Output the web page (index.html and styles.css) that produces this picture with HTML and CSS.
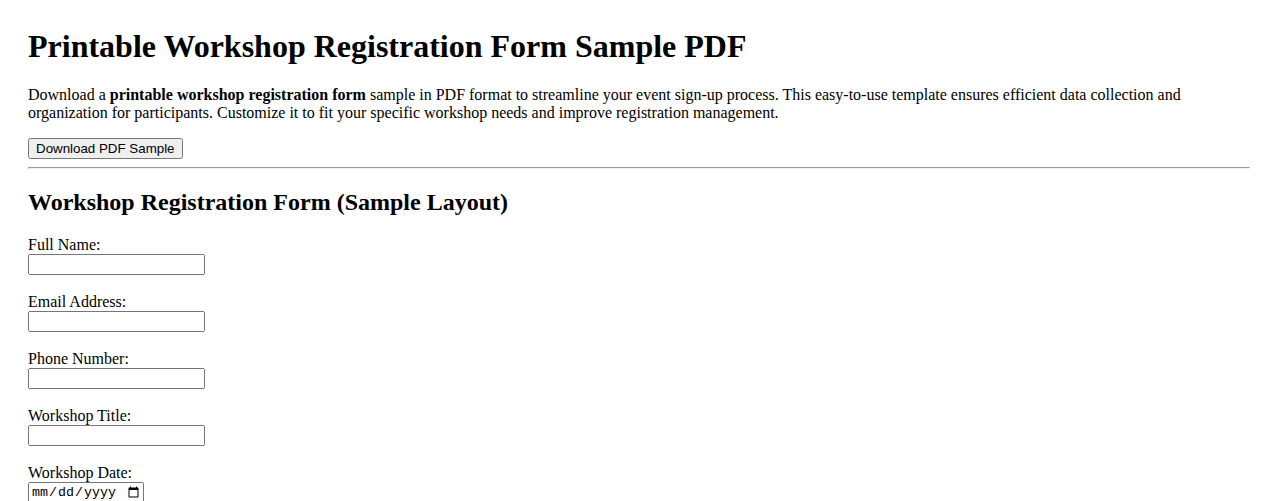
FILE: index.html
```html
<!DOCTYPE html>
<html lang="en">
<head>
<meta charset="utf-8">
<title>Printable Workshop Registration Form Sample PDF</title>
<link rel="stylesheet" href="styles.css">
</head>
<body>
<h1 class="title">Printable Workshop Registration Form Sample PDF</h1>
<p class="intro">Download a <strong>printable workshop registration form</strong> sample in PDF format to streamline your event sign-up process. This easy-to-use template ensures efficient data collection and organization for participants. Customize it to fit your specific workshop needs and improve registration management.</p>
<button class="download" type="button">Download PDF Sample</button>
<hr class="divider">
<h2 class="section-title">Workshop Registration Form (Sample Layout)</h2>
<form class="reg-form">
<label for="name">Full Name:</label><br>
<input class="field" type="text" id="name"><br><br>
<label for="email">Email Address:</label><br>
<input class="field" type="email" id="email"><br><br>
<label for="phone">Phone Number:</label><br>
<input class="field" type="tel" id="phone"><br><br>
<label for="title">Workshop Title:</label><br>
<input class="field" type="text" id="title"><br><br>
<label for="date">Workshop Date:</label><br>
<input class="field date" type="date" id="date"><br><br>
</form>
</body>
</html>
```

FILE: styles.css
```css
body {
  margin: 8px;
  padding: 20px;
  font-family: "Liberation Serif", "Times New Roman", serif;
  font-size: 16px;
  color: #000;
  background: #fff;
}

.title {
  font-size: 32px;
  margin: 0 0 21px;
}

.intro {
  margin: 16px 0;
}

.download {
  font-family: "Liberation Sans", Arial, sans-serif;
  font-size: 13.33px;
}

.divider {
  margin: 8px 0;
}

.section-title {
  font-size: 24px;
  margin: 20px 0;
}

.field {
  box-sizing: border-box;
  width: 177px;
  height: 21px;
  font-family: "Liberation Sans", Arial, sans-serif;
  font-size: 13.33px;
}

.date {
  width: 116px;
  font-family: "Liberation Mono", "Courier New", monospace;
}
```
